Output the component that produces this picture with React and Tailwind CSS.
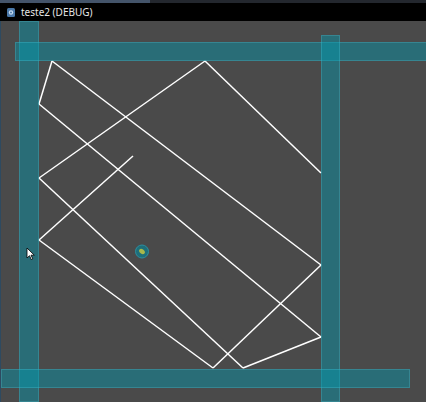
const segments = [
  [52, 40, 39, 83],
  [52, 40, 321, 244],
  [39, 83, 321, 316],
  [205, 40, 39, 157],
  [205, 40, 321, 152],
  [39, 157, 243, 347],
  [133, 135, 39, 219],
  [39, 219, 213, 347],
  [321, 244, 213, 347],
  [321, 316, 243, 347],
];

function Bar({ className }) {
  return <div className={`absolute bg-[#039ab0]/45 border border-[#5fd0e0]/25 ${className}`} />;
}

export default function App() {
  return (
    <div className="w-[426px] h-[402px] flex flex-col bg-[#4a4a4a] overflow-hidden" style={{ fontFamily: '"Segoe UI", "Noto Sans", "Liberation Sans", sans-serif' }}>
      <div className="h-[3px] flex shrink-0 bg-[#23272e]">
        <div className="w-[150px] bg-[#44546a]" />
      </div>
      <div className="h-[18px] shrink-0 bg-black flex items-center gap-[6px] pl-[7px]">
        <svg width="8" height="9" viewBox="0 0 8 9">
          <rect x="0" y="0" width="8" height="9" rx="1.5" fill="#4a78a8" />
          <circle cx="4" cy="4.5" r="2.2" fill="#c8dcf0" />
          <circle cx="4" cy="4.5" r="1" fill="#4a78a8" />
        </svg>
        <span className="text-[10px] leading-none text-[#e6e6e6]">teste2 (DEBUG)</span>
      </div>
      <div className="relative flex-1 border-l border-[#2e4a60]">
        <svg className="absolute left-[-1px] top-0" width="426" height="381">
          {segments.map(([x1, y1, x2, y2], i) => (
            <line key={i} x1={x1} y1={y1} x2={x2} y2={y2} stroke="#ffffff" strokeWidth="1.5" />
          ))}
          <circle cx="142" cy="230.5" r="6.5" fill="#1e6e7a" stroke="#2b8fa0" strokeWidth="1" />
          <ellipse cx="142" cy="230.5" rx="3.2" ry="2.2" transform="rotate(40 142 230.5)" fill="#a9b94a" />
        </svg>
        <Bar className="left-[18px] top-0 w-[20px] h-[381px]" />
        <Bar className="left-[14px] top-[21px] w-[412px] h-[19px]" />
        <Bar className="left-[320px] top-[14px] w-[19px] h-[367px]" />
        <Bar className="left-0 top-[348px] w-[409px] h-[19px]" />
        <svg className="absolute left-[25px] top-[226px]" width="10" height="14" viewBox="0 0 10 14">
          <path d="M1 1 L1 11 L3.5 8.7 L5.3 12.6 L6.8 11.9 L5 8.2 L8.3 8.2 Z" fill="#ffffff" stroke="#000000" strokeWidth="0.8" strokeLinejoin="round" />
        </svg>
      </div>
    </div>
  );
}
